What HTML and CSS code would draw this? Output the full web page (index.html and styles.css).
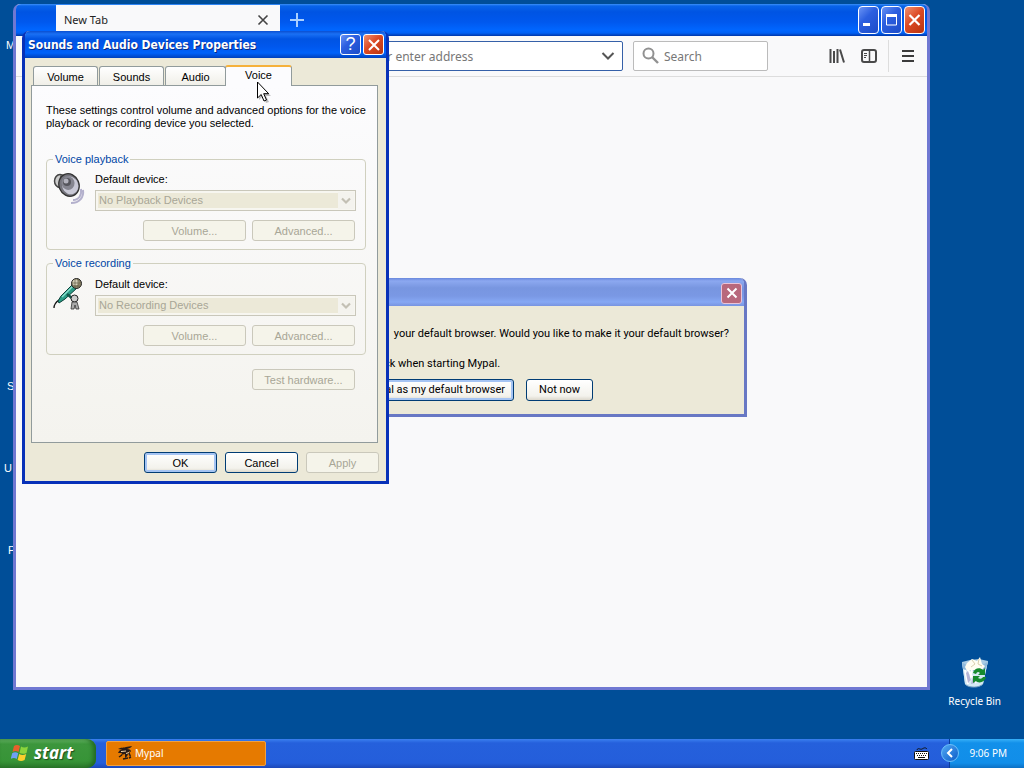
FILE: index.html
```
<!DOCTYPE html>
<html lang="en">
<head>
  <meta charset="UTF-8">
  <title>Desktop</title>
  <meta name="viewport" content="width=device-width, initial-scale=1.0">
  <link rel="stylesheet" href="styles.css">
</head>
<body>

  <div class="desktop">
    <span class="desk-label my-docs">M</span>
    <span class="desk-label setup">S</span>
    <span class="desk-label utils">U</span>
    <span class="desk-label programs">P</span>

    <div class="recycle">
      <svg width="32" height="32" viewBox="0 0 32 32">
        <path d="M3 6l3 22c3 4 15 4 18 0l5-23-9-2-9 1z" fill="#a9cbe4"/>
        <path d="M3 6l3 22c3 4 15 4 18 0l5-23c-5 6-20 7-26 1z" fill="#d3e9f4"/>
        <path d="M3 6c5 5 21 5 26-1l-2 8c-6 3-16 3-23 0z" fill="#8fb9db"/>
        <path d="M8 7l5-4 5 2 3-4 2 7 3 2-4 5-8-1-6 1-2-4z" fill="#fffdf2"/>
        <path d="M13 4l3 4-4 3M20 3l-1 5 4 2" fill="none" stroke="#d9cfae"/>
        <path d="M6 14l3 14M9 14l8 13M13 14l-3 12" stroke="#fff" stroke-width="2"/>
        <path d="M9 15l3 9-3 3-2-10zM14 20l2 7-4 1z" fill="#b5b5d5"/>
        <path d="M14 17c1-5 7-6 10-3l2-2v7h-7l2-2c-2-2-3-1-4 1zM27 21c-1 5-7 7-10 4l-3 2v-7h7l-2 2c2 1 4 1 5-1z" fill="#168a2e"/>
        <path d="M7 29c4 3 13 3 17-1" fill="none" stroke="#6e9ac0"/>
      </svg>
      <span>Recycle Bin</span>
    </div>

    <div class="window browser">
      <div class="browser-title">
        <div class="browser-tab">
          <span>New Tab</span>
          <button class="plain" aria-label="Close tab">
            <svg width="12" height="12" viewBox="0 0 12 12"><path d="M1.500 1.500l9 9M10.500 1.500l-9 9" stroke="#444" stroke-width="1.600"/></svg>
          </button>
        </div>
        <button class="plain new-tab" aria-label="New tab">
          <svg width="14" height="14" viewBox="0 0 14 14"><path d="M7 0v14M0 7h14" stroke="#a9d0ff" stroke-width="2"/></svg>
        </button>
        <div class="window-buttons">
          <button class="caption-btn" aria-label="Minimize">
            <svg width="19" height="26" viewBox="0 0 19 26"><path d="M4 17.500h7" stroke="#fff" stroke-width="3"/></svg>
          </button>
          <button class="caption-btn" aria-label="Maximize">
            <svg width="19" height="26" viewBox="0 0 19 26"><path d="M4.500 8v10h10V8M4 8.500h11" fill="none" stroke="#fff"/><path d="M4 8.500h11" stroke="#fff" stroke-width="3"/></svg>
          </button>
          <button class="caption-btn close" aria-label="Close">
            <svg width="19" height="26" viewBox="0 0 19 26"><path d="M4.500 8l10 10M14.500 8l-10 10" stroke="#fff" stroke-width="2.200"/></svg>
          </button>
        </div>
      </div>
      <div class="toolbar">
        <div class="urlbar">
          <input type="text" aria-label="Address" placeholder="Search or enter address">
          <svg width="14" height="14" viewBox="0 0 14 14"><path d="M1.500 4L7 9.500 12.500 4" fill="none" stroke="#555" stroke-width="2"/></svg>
        </div>
        <div class="searchbar">
          <svg width="18" height="18" viewBox="0 0 18 18"><circle cx="6.500" cy="6.500" r="5" fill="none" stroke="#919191" stroke-width="2"/><path d="M10 10l6 6" stroke="#919191" stroke-width="2.400"/></svg>
          <input type="text" aria-label="Search" placeholder="Search">
        </div>
        <div class="tools">
          <button class="plain" aria-label="Library">
            <svg width="16" height="16" viewBox="0 0 16 16"><path d="M1.500 1v14M5 3v12M8.500 1v14M11 1.500L15 14.500" stroke="#4a4a4a" stroke-width="2"/></svg>
          </button>
          <button class="plain" aria-label="Sidebar">
            <svg width="16" height="16" viewBox="0 0 16 16"><rect x="1" y="2" width="14" height="12" rx="2" fill="none" stroke="#4a4a4a" stroke-width="2"/><path d="M8.500 2v12" stroke="#4a4a4a" stroke-width="1.500"/><path d="M3 5.500h3M3 7.500h3M3 9.500h2" stroke="#4a4a4a"/></svg>
          </button>
          <span class="divider"></span>
          <button class="plain" aria-label="Menu">
            <svg width="14" height="14" viewBox="0 0 14 14"><path d="M1 2h12M1 7h12M1 12h12" stroke="#3c3c3c" stroke-width="2"/></svg>
          </button>
        </div>
      </div>
    </div>

    <div class="window prompt">
      <div class="prompt-title">
        <button class="small-btn close" aria-label="Close">
          <svg width="18" height="18" viewBox="0 0 18 18"><path d="M4.500 4.500l9 9M13.500 4.500l-9 9" stroke="#fff" stroke-width="2"/></svg>
        </button>
      </div>
      <div class="prompt-body">
        <p><span>Mypal is not</span><span>your default browser. Would you like to make it your default browser?</span></p>
        <label class="check"><input type="checkbox" checked> Always perform this check when starting Mypal.</label>
        <div class="prompt-buttons">
          <button class="btn default">Use Mypal as my default browser</button>
          <button class="btn">Not now</button>
        </div>
      </div>
    </div>

    <div class="window sounds">
      <div class="title">
        <h1>Sounds and Audio Devices Properties</h1>
        <button class="small-btn" aria-label="Help">?</button>
        <button class="small-btn close" aria-label="Close">
          <svg width="18" height="18" viewBox="0 0 18 18"><path d="M4 4l10 10M14 4L4 14" stroke="#fff" stroke-width="2"/></svg>
        </button>
      </div>
      <div class="sounds-body">
        <div class="tabs">
          <button class="tab">Volume</button>
          <button class="tab">Sounds</button>
          <button class="tab">Audio</button>
          <button class="tab active">Voice</button>
        </div>
        <div class="panel">
          <p>These settings control volume and advanced options for the voice playback or recording device you selected.</p>

          <fieldset>
            <legend>Voice playback</legend>
            <svg class="device-icon" width="32" height="32" viewBox="0 0 32 32">
              <path d="M20 27c6 0 9-5 8-11M18 30c9 0 13-6 12-13" fill="none" stroke="#b3b0cc" stroke-width="2"/>
              <ellipse cx="7" cy="8" rx="5.500" ry="6.500" fill="#ccc" stroke="#444" stroke-width="1.500"/>
              <path d="M7 2l7-1 8 21-5 1-10-9z" fill="#777"/>
              <ellipse cx="16" cy="12" rx="10" ry="11.500" transform="rotate(-22 16 12)" fill="#75757d" stroke="#333" stroke-width="1.300"/>
              <ellipse cx="17" cy="12.500" rx="8" ry="9" transform="rotate(-22 17 12)" fill="#c9c9d6"/>
              <ellipse cx="15" cy="10" rx="6.500" ry="7" transform="rotate(-22 15 10)" fill="#85858f"/>
              <circle cx="14" cy="9" r="4" fill="#55555c"/>
              <circle cx="13" cy="8" r="2.500" fill="#b3b3bd"/>
            </svg>
            <div class="device">
              <label for="playback">Default device:</label>
              <div class="combo">
                <select id="playback" disabled><option>No Playback Devices</option></select>
                <span class="arrow"><svg width="10" height="8" viewBox="0 0 10 8"><path d="M1 1.500l4 4 4-4" fill="none" stroke="#c3c0b4" stroke-width="2.200"/></svg></span>
              </div>
              <div class="device-buttons">
                <button class="btn" disabled>Volume...</button>
                <button class="btn" disabled>Advanced...</button>
              </div>
            </div>
          </fieldset>

          <fieldset>
            <legend>Voice recording</legend>
            <svg class="device-icon" width="32" height="34" viewBox="0 0 32 34">
              <path d="M1 30c0-4 2-6 5-8" fill="none" stroke="#111" stroke-width="1.300"/>
              <path d="M5 23l3-5 12-12 4 4-12 11-6 4z" fill="#2b9c86" stroke="#0a4038"/>
              <path d="M9 19L20 8" stroke="#8ae0cd" stroke-width="1.500"/>
              <path d="M14 16l6 5" stroke="#12594c" stroke-width="2.500"/>
              <circle cx="23.500" cy="5.500" r="5" fill="#8c8468" stroke="#222"/>
              <circle cx="22.500" cy="4.500" r="3" fill="#d5cfb8"/>
              <path d="M19 5h9M21 8h7M22 1v9M25 1v9" stroke="#655f49" stroke-width=".7"/>
              <circle cx="21.500" cy="20.500" r="3.500" fill="#ccc" stroke="#222"/>
              <path d="M19 24h5l2 7h-3l-1-4-1 4h-3z" fill="#aaa" stroke="#333" stroke-width=".8"/>
            </svg>
            <div class="device">
              <label for="recording">Default device:</label>
              <div class="combo">
                <select id="recording" disabled><option>No Recording Devices</option></select>
                <span class="arrow"><svg width="10" height="8" viewBox="0 0 10 8"><path d="M1 1.500l4 4 4-4" fill="none" stroke="#c3c0b4" stroke-width="2.200"/></svg></span>
              </div>
              <div class="device-buttons">
                <button class="btn" disabled>Volume...</button>
                <button class="btn" disabled>Advanced...</button>
              </div>
            </div>
          </fieldset>

          <button class="btn test" disabled>Test hardware...</button>
        </div>
        <div class="dialog-buttons">
          <button class="btn default">OK</button>
          <button class="btn">Cancel</button>
          <button class="btn" disabled>Apply</button>
        </div>
      </div>
    </div>

    <svg class="cursor" width="14" height="22" viewBox="0 0 14 22">
      <path d="M2 3v16l4-4 3 7 3-1-3-6h5z" fill="#000" opacity=".25"/>
      <path d="M.5 1v16l3.700-3.500 2.800 6.500 2.500-1-2.800-6.300h5z" fill="#fff" stroke="#000"/>
    </svg>
  </div>

  <div class="taskbar">
    <button class="start">
      <svg width="19" height="18" viewBox="0 0 19 18">
        <path d="M3 2c2-1.500 4-1.300 6 0L7.500 8c-2-1.300-4-1.300-6 0z" fill="#e8602c"/>
        <path d="M10 2.500c2 1.300 4.500 1.300 7 0L15.500 9c-2.500 1.200-4.500 1-7 0z" fill="#8bd43c"/>
        <path d="M1.200 9.200c2-1.400 4-1.300 6 0L5.700 15c-2-1.300-4-1.200-6 0z" fill="#6fa0f5"/>
        <path d="M8.200 10c2.400 1.200 4.500 1.200 7 0l-1.600 6c-2.500 1.300-4.800 1.200-7 0z" fill="#fbcf2d"/>
      </svg>
      <span>start</span>
    </button>
    <button class="task">
      <svg width="16" height="16" viewBox="0 0 16 16">
        <path d="M1 4c3-2 6-1 8-2l6-1c-1 2-3 2-5 3 3 0 4 1 4 3l-2-1 2 5-1 1-2-4c0 2-1 4-3 5V9l-4 1 1-2H1c1-3 3-4 6-3z" fill="#2a1c16"/>
        <path d="M4 6.500l5-.5M9 8.500l3-1" stroke="#f6d5a8"/>
        <path d="M2 12l3-2M6 14l5-1M12 13l2-1" stroke="#2a1c16" stroke-width="1.500"/>
      </svg>
      <span>Mypal</span>
    </button>
    <svg class="keyboard" width="15" height="13" viewBox="0 0 15 13">
      <path d="M3 3c1-3 3 0 5-1s3-2 5 0" fill="none" stroke="#111"/>
      <rect x=".5" y="4.500" width="14" height="8" rx="1" fill="#fff" stroke="#111"/>
      <path d="M2 6.500h11M3 8.500h10" stroke="#111" stroke-dasharray="1 1"/><path d="M4 10.500h7" stroke="#111"/>
    </svg>
    <div class="tray">
      <button class="tray-arrow" aria-label="Show hidden icons">
        <svg width="8" height="10" viewBox="0 0 8 10"><path d="M6 1L2 5l4 4" fill="none" stroke="#fff" stroke-width="2"/></svg>
      </button>
      <span>9:06 PM</span>
    </div>
  </div>

</body>
</html>
```
FILE: styles.css
```
* {
  box-sizing: border-box;
}

body {
  margin: 0;
  height: 100vh;
  display: flex;
  flex-direction: column;
  overflow: hidden;
  background-color: #004e98;
  font-family: "Liberation Sans", Arial, sans-serif;
  font-size: 11px;
}

button, input, select {
  font: inherit;
  color: inherit;
  margin: 0;
}

h1, p {
  margin: 0;
}

svg {
  display: block;
  flex: none;
}

.plain {
  background: none;
  border: none;
  padding: 0;
}

.desktop {
  flex: 1;
  position: relative;
}

.desk-label {
  position: absolute;
  color: white;
  line-height: 14px;
}

.my-docs { left: 6px; top: 38px; }
.setup { left: 7px; top: 379px; }
.utils { left: 4px; top: 461px; }
.programs { left: 8px; top: 543px; }

.recycle {
  position: absolute;
  right: 23px;
  bottom: 30px;
  display: flex;
  flex-direction: column;
  align-items: center;
  gap: 5px;
  color: white;
  font-family: "Noto Sans", sans-serif;
  font-size: 10px;
  line-height: 16px;
}

/* windows */
.window {
  position: absolute;
  display: flex;
  flex-direction: column;
}

.browser {
  left: 13px;
  right: 94px;
  top: 4px;
  bottom: 49px;
  background: #f9f9fa;
  border: 3px solid #7078d2;
  border-top: none;
  border-radius: 7px 7px 0 0;
  font-family: "Noto Sans", sans-serif;
}

.browser-title {
  display: flex;
  align-items: center;
  height: 32px;
  padding-left: 40px;
  padding-right: 2px;
  border-radius: 5px 5px 0 0;
  background: linear-gradient(#3b90f8 0, #0864e8 2px, #0054e3 8px, #0058ee 18px, #0066ff 26px, #0060f4 29px, #0036a8 32px);
}

.browser-tab {
  display: flex;
  align-items: center;
  justify-content: space-between;
  width: 224px;
  align-self: stretch;
  margin-top: 1px;
  padding: 0 11px 2px 8px;
  background: #f9f9fa;
  color: #222;
}

.new-tab {
  margin-left: 10px;
}

.window-buttons {
  display: flex;
  gap: 2px;
  margin-left: auto;
}

.caption-btn, .small-btn {
  display: flex;
  align-items: center;
  justify-content: center;
  padding: 0;
  border: 1px solid white;
  border-radius: 4px;
  background: linear-gradient(135deg, #6a94f5, #2c5fe0 40%, #1c4cc8);
  color: white;
}

.caption-btn {
  width: 21px;
  height: 28px;
}

.small-btn {
  width: 21px;
  height: 21px;
  border-radius: 3px;
  font-size: 18px;
}

.close {
  background: linear-gradient(135deg, #f09070, #dc4a25 45%, #b9340f);
}

.toolbar {
  display: flex;
  align-items: center;
  height: 41px;
  padding: 0 12px 0 142px;
  border-bottom: 1px solid #ddd;
  color: #777;
  font-size: 12px;
}

.urlbar, .searchbar {
  display: flex;
  align-items: center;
  height: 30px;
  background: white;
  border: 1px solid #bbb;
  border-radius: 2px;
}

.urlbar {
  flex: 1;
  padding: 0 7px 0 180px;
  border-color: #3560a8;
}

.searchbar {
  width: 135px;
  margin-left: 10px;
  padding-left: 8px;
  gap: 4px;
}

.toolbar input {
  flex: 1;
  min-width: 0;
  padding: 0;
  border: none;
  background: none;
}

.toolbar input::placeholder {
  color: #777;
}

.tools {
  display: flex;
  align-items: center;
  gap: 16px;
  margin-left: 61px;
}

.divider {
  width: 1px;
  height: 32px;
  margin: 0 -4px 0 -5px;
  background: #ddd;
}

/* buttons */
.btn {
  height: 21px;
  padding: 0 8px;
  border: 1px solid #003c74;
  border-radius: 3px;
  background: linear-gradient(#fff, #f3f2ec 80%, #dcd8cc);
  color: black;
  line-height: 14px;
}

.btn.default {
  box-shadow: inset 0 0 0 2px #a5c4f3;
}

.btn:disabled {
  border-color: #cac8bb;
  background: #f5f4ea;
  color: #a8a696;
}

/* default browser prompt */
.prompt {
  left: 196px;
  top: 278px;
  width: 551px;
  border: 3px solid #6878c4;
  border-top: none;
  border-radius: 7px 7px 0 0;
  background: #ece9d8;
  font-family: Roboto, sans-serif;
  font-size: 11px;
}

.prompt-title {
  display: flex;
  justify-content: flex-end;
  align-items: center;
  height: 28px;
  padding: 2px 2px 0;
  border-radius: 5px 5px 0 0;
  background: linear-gradient(#6a88dc, #8ca8f0 3px, #7896e0 10px, #7a98e4 18px, #86a8f4 24px, #7894e0);
}

.prompt .close {
  background: #b8687c;
  border-color: #eac4d8;
}

.prompt-body {
  padding: 21px 15px 13px;
  line-height: 14px;
}

.prompt-body p {
  display: flex;
  justify-content: flex-end;
  gap: 6px;
  white-space: nowrap;
}

.check {
  display: flex;
  align-items: center;
  gap: 4px;
  margin: 16px 0 8px 35px;
}

.check input {
  width: 13px;
  height: 13px;
}

.prompt-buttons {
  display: flex;
  justify-content: center;
  gap: 12px;
  padding-right: 16px;
}

.prompt-buttons .btn {
  height: 22px;
  padding: 0 12px;
}

.prompt-buttons .default {
  padding: 0 8px;
}

/* sounds dialog */
.sounds {
  left: 22px;
  top: 31px;
  width: 367px;
  border: 3px solid #0831b8;
  border-top: none;
  border-radius: 7px 7px 0 0;
  background: #ece9d8;
}

.title {
  display: flex;
  align-items: center;
  gap: 2px;
  height: 27px;
  padding: 0 2px 0 3px;
  border-radius: 5px 5px 0 0;
  background: linear-gradient(#0a4ed0, #1a70f4 3px, #0054e3 8px, #0058ee 16px, #0062fa 22px, #0040bc);
  color: white;
}

.title h1 {
  flex: 1;
  font-family: "DejaVu Sans Condensed", "DejaVu Sans", sans-serif;
  font-size: 12px;
  font-weight: bold;
  text-shadow: 1px 1px #0a2a80;
  white-space: nowrap;
}

.sounds-body {
  padding: 7px 8px 8px 6px;
}

.tabs {
  display: flex;
  align-items: flex-end;
  gap: 1px;
  padding-left: 2px;
}

.tab {
  width: 65px;
  height: 19px;
  padding: 1px 0 0;
  border: 1px solid #919b9c;
  border-bottom: none;
  border-radius: 3px 3px 0 0;
  background: linear-gradient(#fff, #f0efe8);
  color: black;
}

.tab:nth-child(3) {
  width: 61px;
}

.tab.active {
  position: relative;
  width: 67px;
  height: 21px;
  margin-left: -2px;
  margin-bottom: -1px;
  padding: 0 0 3px;
  border-top: 2px solid #f5b13c;
  background: #fcfcfe;
}

.panel {
  padding: 18px 11px 52px 14px;
  border: 1px solid #919b9c;
  background: linear-gradient(#fcfcfe, #f4f3ee);
  line-height: 13px;
}

fieldset {
  display: flex;
  gap: 10px;
  min-width: 0;
  margin: 22px 0 0;
  padding: 7px 9px 8px 6px;
  border: 1px solid #d0d0bf;
  border-radius: 4px;
}

fieldset + fieldset {
  margin-top: 6px;
  padding-top: 8px;
}

legend {
  padding: 0 2px;
  color: #0046a5;
  line-height: 14px;
}

.device {
  flex: 1;
  display: flex;
  flex-direction: column;
}

.combo {
  position: relative;
  margin: 4px 0 9px;
}

.combo select {
  display: block;
  width: 100%;
  height: 21px;
  padding: 0 3px;
  appearance: none;
  border: 1px solid #c9c7ba;
  border-radius: 0;
  background: #ece9d8;
  box-shadow: inset 0 0 0 2px #f7f6f0;
  color: #a8a696;
  opacity: 1;
}

.arrow {
  position: absolute;
  top: 2px;
  right: 2px;
  bottom: 2px;
  width: 16px;
  display: flex;
  align-items: center;
  justify-content: center;
  background: #f4f3ee;
}

.device-buttons, .dialog-buttons {
  display: flex;
  justify-content: flex-end;
}

.device-buttons {
  gap: 6px;
  padding-right: 1px;
}

.device-buttons .btn, .test {
  width: 103px;
}

.test {
  display: block;
  margin: 14px 11px 0 auto;
}

.dialog-buttons {
  gap: 8px;
  margin: 9px -1px 0 0;
}

.dialog-buttons .btn {
  width: 73px;
}

.cursor {
  position: absolute;
  left: 257px;
  top: 81px;
}

/* taskbar */
.taskbar {
  display: flex;
  align-items: center;
  height: 29px;
  background: linear-gradient(#3a80f0, #2560dc 4px, #245edb 24px, #1c48b8);
  color: white;
  font-family: "Noto Sans", sans-serif;
}

.start {
  display: flex;
  align-items: center;
  gap: 4px;
  width: 96px;
  height: 29px;
  padding: 0 0 2px 11px;
  border: none;
  border-radius: 0 9px 9px 0;
  background: linear-gradient(#6cbc6c, #3c963c 5px, #379437 22px, #2c7a2c);
  box-shadow: inset -3px 0 4px #226a22;
  font-family: "Open Sans", sans-serif;
  font-size: 17px;
  font-style: italic;
  font-weight: bold;
  line-height: 20px;
  text-shadow: 1px 1px 1px #1c4c1c;
}

.task {
  display: flex;
  align-items: center;
  gap: 2px;
  width: 160px;
  height: 25px;
  margin: 0 auto 0 10px;
  padding: 0 10px 1px;
  border: 1px solid #f0a040;
  border-radius: 2px;
  background: #e67a00;
  font-size: 10px;
}

.keyboard {
  margin-right: 20px;
}

.tray {
  position: relative;
  display: flex;
  align-items: center;
  align-self: stretch;
  padding: 0 17px 1px 19px;
  border-left: 1px solid #0a3c9c;
  background: linear-gradient(#38b0f8, #1290ea 4px, #118ee9 24px, #0c70c4);
  font-size: 10px;
}

.tray-arrow {
  position: absolute;
  left: -9px;
  top: 5px;
  display: flex;
  align-items: center;
  justify-content: center;
  width: 18px;
  height: 18px;
  padding: 0;
  border: 1px solid #6cc0f8;
  border-radius: 50%;
  background: linear-gradient(135deg, #50a8f4, #0c5cc8);
}
```
